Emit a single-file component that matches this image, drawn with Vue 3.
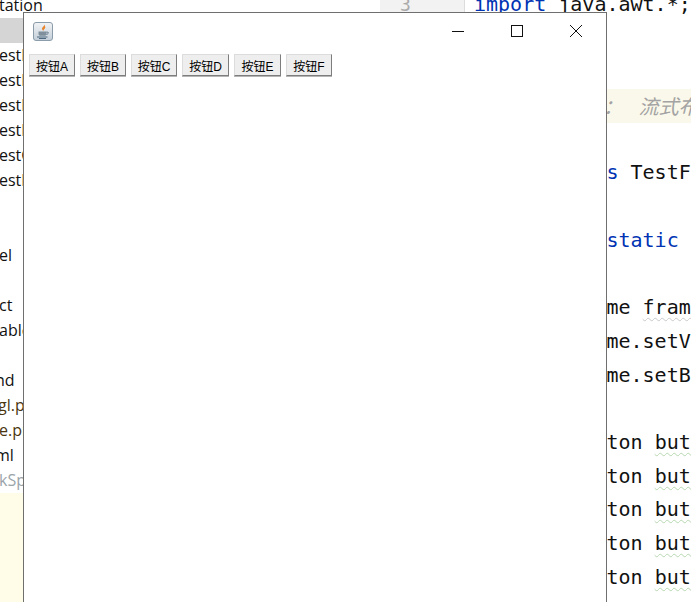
<script setup>
const tree = [
  { t: 'tation' }, { t: '', sel: true }, { t: 'estB' }, { t: 'estF' }, { t: 'estF' }, { t: 'estF' },
  { t: 'estG' }, { t: 'estF' }, { t: '' }, { t: '' }, { t: 'el' }, { t: '' }, { t: 'ct' }, { t: 'able' },
  { t: '' }, { t: 'nd', c: 'cut' }, { t: 'gl.pr', c: 'brown cut-s' }, { t: 'e.pr', c: 'brown' }, { t: 'ml', c: 'cut' }, { t: 'kSp', c: 'muted' }
]
const code = [
  { parts: [['kw', 'import'], ['', ' java.awt.*;']] },
  {}, {},
  { note: true, parts: [['note', '程： 流式布局']] },
  {},
  { parts: [['kw', 'public class'], ['', ' TestFlowLayout']] },
  {},
  { parts: [['', '           '], ['kw', 'static'], ['', ' void']] },
  {},
  { parts: [['', '           me '], ['warn', 'frame']] },
  { parts: [['', '           me.setVisible']] },
  { parts: [['', '           me.setBounds']] },
  {},
  { parts: [['', '           ton '], ['hint', 'button']] },
  { parts: [['', '           ton '], ['hint', 'button']] },
  { parts: [['', '           ton '], ['hint', 'button']] },
  { parts: [['', '           ton '], ['hint', 'button']] },
  { parts: [['', '           ton '], ['hint', 'button']] }
]
const buttons = [
  { label: 'A', w: 46 }, { label: 'B', w: 46 }, { label: 'C', w: 46 },
  { label: 'D', w: 47 }, { label: 'E', w: 47 }, { label: 'F', w: 46 }
]
</script>

<template>
  <div class="desk">
    <aside class="tree">
      <div class="rows">
        <div v-for="(r, i) in tree" :key="i" class="row" :class="[r.c, { sel: r.sel }]">{{ r.t }}</div>
      </div>
      <div class="tree-fill"></div>
    </aside>
    <main class="editor">
      <div class="gutter"><span class="num">3</span></div>
      <div class="code">
        <div v-for="(l, i) in code" :key="i" class="line" :class="{ noted: l.note }">
          <span v-for="(p, j) in l.parts || []" :key="j" :class="p[0]">{{ p[1] }}</span>
        </div>
      </div>
    </main>

    <section class="win">
      <header class="title">
        <svg class="java" width="20" height="19" viewBox="0 0 20 19">
          <defs>
            <linearGradient id="jg" x1="0" y1="0" x2="0" y2="1">
              <stop offset="0" stop-color="#f2f4f6" />
              <stop offset="1" stop-color="#c3ced8" />
            </linearGradient>
          </defs>
          <rect x=".5" y=".5" width="19" height="18" rx="2.5" fill="url(#jg)" stroke="#8b9cab" />
          <path d="M11 2.500c1 1.800-2.800 2.800-1.800 5 .3.700.8 1.100 1.200 1.400-.2-1.500 2.400-2.200 1.800-4.200C12 3.900 11.700 3.100 11 2.500z" fill="#e8842c" />
          <path d="M5.500 9.500h8v2.500c0 1.200-1 1.800-2 1.800h-4c-1 0-2-.6-2-1.800z" fill="#7f8f9c" />
          <path d="M13.500 10.200h1.200c1 0 1 1.800-1.200 2.200" fill="none" stroke="#5a7286" />
          <path d="M4 15h10.500M6 16.500h7" stroke="#4f6a80" />
        </svg>
        <div class="controls">
          <svg width="14" height="14" viewBox="0 0 14 14"><path d="M1 7.500h12" stroke="#111" /></svg>
          <svg width="14" height="14" viewBox="0 0 14 14"><rect x="1.500" y="1.500" width="11" height="11" fill="none" stroke="#111" /></svg>
          <svg width="14" height="14" viewBox="0 0 14 14"><path d="M1 1l12 12M13 1L1 13" stroke="#111" /></svg>
        </div>
      </header>
      <div class="bar">
        <button
          v-for="b in buttons"
          :key="b.label"
          class="jbtn"
          type="button"
          :style="{ width: b.w + 'px' }"
        >按钮{{ b.label }}</button>
      </div>
    </section>
  </div>
</template>

<style scoped>
.desk {
  position: relative;
  display: flex;
  width: 691px;
  height: 602px;
  overflow: hidden;
  background: #fff;
}
.tree {
  display: flex;
  flex-direction: column;
  width: 380px;
  flex: none;
  overflow: hidden;
  font-family: "Open Sans", "Noto Sans", sans-serif;
  font-size: 16px;
  color: #111;
}
.rows { margin-top: -7px; }
.row {
  height: 25px;
  line-height: 25px;
  margin-left: -1px;
  white-space: nowrap;
}
.cut { margin-left: -5px; }
.cut-s { margin-left: -2px; }
.sel { background: #d5d5d5; }
.brown { color: #4a3510; }
.muted { color: #9ba4aa; }
.tree-fill { flex: 1; background: #fffde8; }
.editor { display: flex; flex: 1; min-width: 0; }
.gutter {
  width: 84px;
  flex: none;
  background: #f2f2f2;
  border-right: 1px solid #dcdcdc;
  font-family: "DejaVu Sans Mono", monospace;
  font-size: 18px;
  line-height: 10px;
  color: #aaa;
}
.num { display: block; padding-left: 20px; }
.code {
  flex: 1;
  margin-top: -12px;
  padding-left: 9px;
  font-family: "DejaVu Sans Mono", monospace;
  font-size: 20px;
  line-height: 33.7px;
  white-space: pre;
  color: #111;
  overflow: hidden;
}
.line { height: 33.7px; }
.noted {
  margin-left: -9px;
  padding-left: 118px;
  background: #faf8ea;
}
.kw { color: #0033b3; }
.note {
  font-family: "Noto Sans CJK SC", sans-serif;
  font-style: italic;
  font-size: 20px;
  word-spacing: 11px;
  color: #a3a3a3;
}
.warn { text-decoration: underline wavy #c9c9c9 1px; text-underline-offset: 3px; }
.hint { text-decoration: underline wavy #b6d8b0 1px; text-underline-offset: 3px; }

.win {
  position: absolute;
  left: 23px;
  top: 12px;
  width: 582px;
  height: 600px;
  background: #fff;
  border: 1px solid #6f6f6f;
}
.title {
  display: flex;
  align-items: center;
  justify-content: space-between;
  height: 36px;
  padding: 0 23px 0 9px;
}
.java { flex: none; }
.controls { display: flex; gap: 45px; align-items: center; }
.bar {
  display: flex;
  gap: 5px;
  padding: 5px 5px 0;
}
.jbtn {
  height: 22px;
  padding: 0;
  margin: 0;
  background: #eeeeee;
  border: 1px solid;
  border-color: #dcdcdc #7d7d7d #7d7d7d #dcdcdc;
  box-shadow: 0 1px 0 #b5b5b5;
  border-radius: 0;
  font-family: "Liberation Sans", "Noto Sans CJK SC", sans-serif;
  font-size: 12px;
  color: #000;
  white-space: nowrap;
}
</style>
